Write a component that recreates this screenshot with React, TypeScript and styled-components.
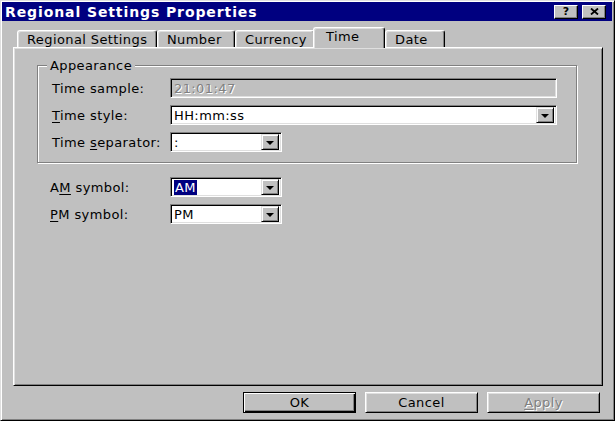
import React from "react";
import styled, { createGlobalStyle } from "styled-components";

const Global = createGlobalStyle`
  html, body { margin: 0; padding: 0; background: #c0c0c0; }
  #root { width: 615px; height: 421px; }
`;

const Window = styled.div`
  width: 615px;
  height: 421px;
  box-sizing: border-box;
  background: #c0c0c0;
  border: 1px solid;
  border-color: #dfdfdf #000 #000 #dfdfdf;
  box-shadow: inset 1px 1px #fff, inset -1px -1px #808080;
  padding: 1px 2px 7px 1px;
  display: flex;
  flex-direction: column;
  overflow: hidden;
  font-family: "DejaVu Sans", "Liberation Sans", sans-serif;
  font-size: 13px;
  letter-spacing: 0.4px;
  color: #000;
`;

const TitleBar = styled.div`
  height: 19px;
  flex: none;
  background: #000080;
  display: flex;
  align-items: center;
  padding: 0 6px 0 3px;
  color: #fff;
  font-weight: bold;
  font-size: 14px;
  letter-spacing: 0.9px;
`;

const TitleText = styled.span`
  flex: 1;
  white-space: nowrap;
`;

const TitleButtons = styled.div`
  display: flex;
  gap: 4px;
  letter-spacing: 0;
`;

const TitleButton = styled.div`
  width: 24px;
  height: 14px;
  box-sizing: border-box;
  background: #c0c0c0;
  border: 1px solid;
  border-color: #fff #000 #000 #fff;
  box-shadow: inset -1px -1px #808080;
  display: flex;
  align-items: center;
  justify-content: center;
  color: #000;
  font-size: 11px;
  font-weight: bold;
  line-height: 1;
`;

const Body = styled.div`
  flex: 1;
  display: flex;
  flex-direction: column;
  padding: 6px 9px 0 11px;
  min-height: 0;
`;

const TabRow = styled.div`
  height: 20px;
  flex: none;
  display: flex;
  align-items: flex-end;
  padding-left: 4px;
`;

const Tab = styled.div<{ $w: number; $active?: boolean }>`
  width: ${(p) => p.$w}px;
  height: ${(p) => (p.$active ? 21 : 17)}px;
  box-sizing: border-box;
  flex: none;
  background: #c0c0c0;
  border-top: 1px solid #fff;
  border-left: 1px solid #fff;
  border-right: 1px solid #000;
  border-radius: 3px 3px 0 0;
  box-shadow: inset -1px 0 #808080, inset 1px 1px #dfdfdf;
  display: flex;
  align-items: center;
  padding-left: ${(p) => (p.$active ? 12 : 9)}px;
  padding-bottom: ${(p) => (p.$active ? 3 : 0)}px;
  white-space: nowrap;
  ${(p) =>
    p.$active
      ? `position: relative; z-index: 1; margin: 0 0 -1px -2px;`
      : ``}
`;

const Panel = styled.div`
  flex: 1;
  box-sizing: border-box;
  border: 1px solid;
  border-color: #fff #000 #000 #fff;
  box-shadow: inset 1px 1px #dfdfdf, inset -1px -1px #808080;
  padding: 10px 23px 0 23px;
  display: flex;
  flex-direction: column;
`;

const Group = styled.fieldset`
  margin: 0;
  padding: 5px 14px 10px 14px;
  border: 1px solid #808080;
  box-shadow: 1px 1px 0 #fff, inset 1px 1px 0 #fff;
  display: flex;
  flex-direction: column;
  gap: 7px;
  width: 540px;
  box-sizing: border-box;
`;

const Legend = styled.legend`
  padding: 0 3px;
  margin-left: -5px;
  background: #c0c0c0;
  line-height: 15px;
`;

const Row = styled.div<{ $label: number }>`
  display: grid;
  grid-template-columns: ${(p) => p.$label}px auto;
  align-items: center;
  height: 20px;
`;

const Label = styled.span`
  white-space: nowrap;
`;

const U = styled.span`
  text-decoration: underline;
  text-underline-offset: 2px;
`;

const Field = styled.div<{ $w: number; $disabled?: boolean }>`
  width: ${(p) => p.$w}px;
  height: 20px;
  box-sizing: border-box;
  border: 1px solid;
  border-color: #808080 #fff #fff #808080;
  box-shadow: inset 1px 1px #000, inset -1px -1px #dfdfdf;
  background: ${(p) => (p.$disabled ? "#c0c0c0" : "#fff")};
  color: ${(p) => (p.$disabled ? "#808080" : "#000")};
  ${(p) => (p.$disabled ? "text-shadow: 1px 1px #fff;" : "")}
  display: flex;
  align-items: center;
  padding: 2px 2px 2px 3px;
  white-space: nowrap;
`;

const FieldText = styled.span`
  flex: 1;
`;

const Selected = styled.span`
  background: #000080;
  color: #fff;
  padding: 0 1px;
`;

const DropButton = styled.div`
  width: 18px;
  height: 16px;
  box-sizing: border-box;
  flex: none;
  background: #c0c0c0;
  border: 1px solid;
  border-color: #dfdfdf #000 #000 #dfdfdf;
  box-shadow: inset 1px 1px #fff, inset -1px -1px #808080;
  display: flex;
  align-items: center;
  justify-content: center;
`;

const Arrow = styled.div`
  width: 0;
  height: 0;
  border-left: 4px solid transparent;
  border-right: 4px solid transparent;
  border-top: 4px solid #000;
  margin-top: 1px;
`;

const Symbols = styled.div`
  display: flex;
  flex-direction: column;
  gap: 7px;
  margin-top: 14px;
  margin-left: 13px;
`;

const ButtonRow = styled.div`
  flex: none;
  display: flex;
  justify-content: flex-end;
  gap: 9px;
  margin-top: 6px;
  padding-right: 3px;
`;

const Button = styled.div<{ $default?: boolean; $disabled?: boolean }>`
  width: 113px;
  height: 21px;
  box-sizing: border-box;
  background: #c0c0c0;
  display: flex;
  align-items: center;
  justify-content: center;
  border: 1px solid;
  border-color: ${(p) => (p.$default ? "#000" : "#fff #000 #000 #fff")};
  box-shadow: ${(p) =>
    p.$default
      ? "inset 1px 1px #fff, inset -1px -1px #000, inset -2px -2px #808080"
      : "inset 1px 1px #dfdfdf, inset -1px -1px #808080"};
  color: ${(p) => (p.$disabled ? "#808080" : "#000")};
  ${(p) => (p.$disabled ? "text-shadow: 1px 1px #fff;" : "")}
`;

const Combo = ({ w, children }: { w: number; children: React.ReactNode }) => (
  <Field $w={w}>
    <FieldText>{children}</FieldText>
    <DropButton>
      <Arrow />
    </DropButton>
  </Field>
);

export default function App() {
  return (
    <>
      <Global />
      <Window>
        <TitleBar>
          <TitleText>Regional Settings Properties</TitleText>
          <TitleButtons>
            <TitleButton>?</TitleButton>
            <TitleButton>
              <svg width="9" height="7" viewBox="0 0 9 7">
                <path d="M1 0.5 L8 6.5 M8 0.5 L1 6.5" stroke="#000" strokeWidth="1.8" />
              </svg>
            </TitleButton>
          </TitleButtons>
        </TitleBar>
        <Body>
          <TabRow>
            <Tab $w={140}>Regional Settings</Tab>
            <Tab $w={78}>Number</Tab>
            <Tab $w={80}>Currency</Tab>
            <Tab $w={72} $active>
              Time
            </Tab>
            <Tab $w={60}>Date</Tab>
          </TabRow>
          <Panel>
            <Group>
              <Legend>Appearance</Legend>
              <Row $label={118}>
                <Label>Time sample:</Label>
                <Field $w={387} $disabled>
                  21:01:47
                </Field>
              </Row>
              <Row $label={118}>
                <Label>
                  <U>T</U>ime style:
                </Label>
                <Combo w={387}>HH:mm:ss</Combo>
              </Row>
              <Row $label={118}>
                <Label>
                  Time <U>s</U>eparator:
                </Label>
                <Combo w={112}>:</Combo>
              </Row>
            </Group>
            <Symbols>
              <Row $label={120}>
                <Label>
                  A<U>M</U> symbol:
                </Label>
                <Combo w={112}>
                  <Selected>AM</Selected>
                </Combo>
              </Row>
              <Row $label={120}>
                <Label>
                  <U>P</U>M symbol:
                </Label>
                <Combo w={112}>PM</Combo>
              </Row>
            </Symbols>
          </Panel>
          <ButtonRow>
            <Button $default>OK</Button>
            <Button>Cancel</Button>
            <Button $disabled>
              <span>
                <U>A</U>pply
              </span>
            </Button>
          </ButtonRow>
        </Body>
      </Window>
    </>
  );
}
